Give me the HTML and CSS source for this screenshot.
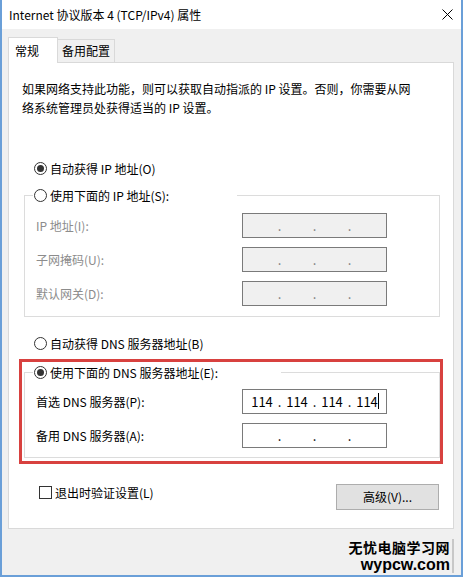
FILE: index.html
```html
<!DOCTYPE html>
<html>
    <head>
        <meta charset="utf-8">
        <title>Internet 协议版本 4 (TCP/IPv4) 属性</title>
        <link rel="stylesheet" href="styles.css">
    </head>
    <body>
        <div class="window">
            <div class="titlebar">
                <span class="title">Internet 协议版本 4 (TCP/IPv4) 属性</span>
                <svg class="close" width="11" height="11" viewBox="0 0 11 11">
                    <path d="M0.5 0.5 L10.5 10.5 M10.5 0.5 L0.5 10.5" stroke="#000" stroke-width="1" fill="none"/>
                </svg>
            </div>

            <div class="tabs">
                <div class="tab active">常规</div>
                <div class="tab">备用配置</div>
            </div>

            <div class="panel">
                <p class="intro">如果网络支持此功能，则可以获取自动指派的 IP 设置。否则，你需要从网<br>络系统管理员处获得适当的 IP 设置。</p>

                <div class="radio-row first">
                    <span class="radio checked"></span>
                    <span>自动获得 IP 地址(O)</span>
                </div>

                <fieldset class="group ip-group">
                    <legend class="legend-ip">
                        <span class="radio"></span>
                        <span>使用下面的 IP 地址(S):</span>
                    </legend>
                    <div class="field-grid">
                        <span class="label disabled">IP 地址(I):</span>
                        <div class="ip-box disabled-box">
                            <span class="seg"></span><span class="dot">.</span><span class="seg"></span><span class="dot">.</span><span class="seg"></span><span class="dot">.</span><span class="seg"></span>
                        </div>
                        <span class="label disabled">子网掩码(U):</span>
                        <div class="ip-box disabled-box">
                            <span class="seg"></span><span class="dot">.</span><span class="seg"></span><span class="dot">.</span><span class="seg"></span><span class="dot">.</span><span class="seg"></span>
                        </div>
                        <span class="label disabled">默认网关(D):</span>
                        <div class="ip-box disabled-box">
                            <span class="seg"></span><span class="dot">.</span><span class="seg"></span><span class="dot">.</span><span class="seg"></span><span class="dot">.</span><span class="seg"></span>
                        </div>
                    </div>
                </fieldset>

                <div class="radio-row dns-auto">
                    <span class="radio"></span>
                    <span>自动获得 DNS 服务器地址(B)</span>
                </div>

                <div class="highlight">
                    <fieldset class="group dns-group">
                        <legend class="legend-dns">
                            <span class="radio checked"></span>
                            <span>使用下面的 DNS 服务器地址(E):</span>
                        </legend>
                        <div class="field-grid">
                            <span class="label">首选 DNS 服务器(P):</span>
                            <div class="ip-box">
                                <span class="seg">114</span><span class="dot">.</span><span class="seg">114</span><span class="dot">.</span><span class="seg">114</span><span class="dot">.</span><span class="seg">114<span class="caret"></span></span>
                            </div>
                            <span class="label">备用 DNS 服务器(A):</span>
                            <div class="ip-box">
                                <span class="seg"></span><span class="dot">.</span><span class="seg"></span><span class="dot">.</span><span class="seg"></span><span class="dot">.</span><span class="seg"></span>
                            </div>
                        </div>
                    </fieldset>
                </div>

                <div class="bottom-row">
                    <div class="check-row">
                        <span class="checkbox"></span>
                        <span>退出时验证设置(L)</span>
                    </div>
                    <div class="button">高级(V)...</div>
                </div>
            </div>

            <div class="watermark">
                <div class="wm-cn">无忧电脑学习网</div>
                <div class="wm-en">wypcw.com</div>
            </div>
        </div>
    </body>
</html>
```

FILE: styles.css
```css
body {
    margin: 0;
    background: #f0f0f0;
    font-family: "Noto Sans CJK SC", sans-serif;
    font-size: 12px;
    color: #000;
}
.window {
    width: 463px;
    height: 577px;
    box-sizing: border-box;
    border: 2px solid #6a9fd8;
    border-top: 0;
    background: #f0f0f0;
    display: flex;
    flex-direction: column;
}
.titlebar {
    height: 29px;
    background: #fff;
    display: flex;
    align-items: center;
    justify-content: space-between;
    padding: 0 7px 0 7px;
}
.title {
    font-size: 12px;
    line-height: 16px;
}
.close {
    display: block;
    margin-right: 1px;
}
.tabs {
    display: flex;
    align-items: flex-end;
    margin: 8px 0 0 6px;
    height: 25px;
}
.tab {
    box-sizing: border-box;
    border: 1px solid #d9d9d9;
    border-bottom: 0;
    background: #f0f0f0;
    height: 23px;
    width: 57px;
    line-height: 22px;
    padding-left: 4px;
    border-left: 0;
}
.tab.active {
    position: relative;
    z-index: 1;
    background: #fff;
    height: 26px;
    width: 50px;
    margin-bottom: -1px;
    padding-left: 6px;
    line-height: 25px;
    border-left: 1px solid #d9d9d9;
}
.panel {
    box-sizing: border-box;
    width: 446px;
    height: 467px;
    margin-left: 6px;
    background: #fff;
    border: 1px solid #d9d9d9;
    padding: 16px 0 0 13px;
}
.intro {
    margin: 0;
    line-height: 19px;
}
.radio-row, .check-row {
    display: flex;
    align-items: center;
    gap: 3px;
    height: 20px;
}
.radio-row.first {
    margin: 41px 0 0 12px;
}
.radio-row.dns-auto {
    margin: 16px 0 0 12px;
}
.radio {
    box-sizing: border-box;
    width: 13px;
    height: 13px;
    border: 1px solid #333;
    border-radius: 50%;
    display: inline-flex;
    align-items: center;
    justify-content: center;
    background: #fff;
}
.radio.checked::after {
    content: "";
    width: 7px;
    height: 7px;
    border-radius: 50%;
    background: #333;
}
.group {
    margin: 0 0 0 2px;
    width: 416px;
    box-sizing: border-box;
    border: 1px solid #dcdcdc;
    padding: 8px 0 10px 11px;
    min-width: 0;
}
.ip-group {
    margin-top: 7px;
}
legend {
    display: flex;
    align-items: center;
    gap: 3px;
    height: 20px;
    box-sizing: border-box;
    margin-left: -3px;
    padding: 0 0 0 1px;
    background: #fff;
}
.legend-ip {
    width: 204px;
}
.legend-dns {
    width: 248px;
}
.field-grid {
    display: grid;
    grid-template-columns: 206px 145px;
    grid-auto-rows: 25px;
    row-gap: 9px;
    align-items: center;
}
.label.disabled {
    color: #8c8c8c;
}
.ip-box {
    box-sizing: border-box;
    height: 25px;
    width: 145px;
    border: 1px solid #7a7a7a;
    background: #fff;
    display: flex;
    align-items: center;
    padding-left: 4px;
    font-size: 13px;
}
.disabled-box {
    background: #f0f0f0;
    color: #7a7a7a;
}
.seg {
    width: 30px;
    text-align: center;
    position: relative;
}
.dot {
    width: 5px;
    text-align: center;
}
.caret {
    position: absolute;
    right: 3px;
    top: 1px;
    height: 16px;
    border-right: 1px solid #000;
}
.highlight {
    box-sizing: border-box;
    width: 424px;
    margin: 6px 0 0 -3px;
    border: 3px solid #d8413f;
    padding: 0 0 3px 0;
}
.dns-group {
    padding: 7px 0 9px 11px;
}
.bottom-row {
    display: flex;
    justify-content: space-between;
    align-items: flex-start;
    margin-top: 20px;
    width: 417px;
}
.check-row {
    margin: 0 0 0 17px;
    height: 16px;
}
.checkbox {
    box-sizing: border-box;
    width: 13px;
    height: 13px;
    border: 1px solid #333;
    background: #fff;
}
.button {
    box-sizing: border-box;
    width: 103px;
    height: 26px;
    background: #e1e1e1;
    border: 1px solid #adadad;
    text-align: center;
    line-height: 24px;
}
.watermark {
    align-self: flex-end;
    margin: 10px 7px 0 0;
    padding-right: 2px;
    border-right: 2px solid #c8c8c8;
    text-align: right;
    font-weight: bold;
}
.wm-cn {
    font-size: 14px;
    line-height: 17px;
    letter-spacing: 0.5px;
}
.wm-en {
    font-family: "Liberation Sans", sans-serif;
    font-size: 16px;
    line-height: 17px;
}
```
